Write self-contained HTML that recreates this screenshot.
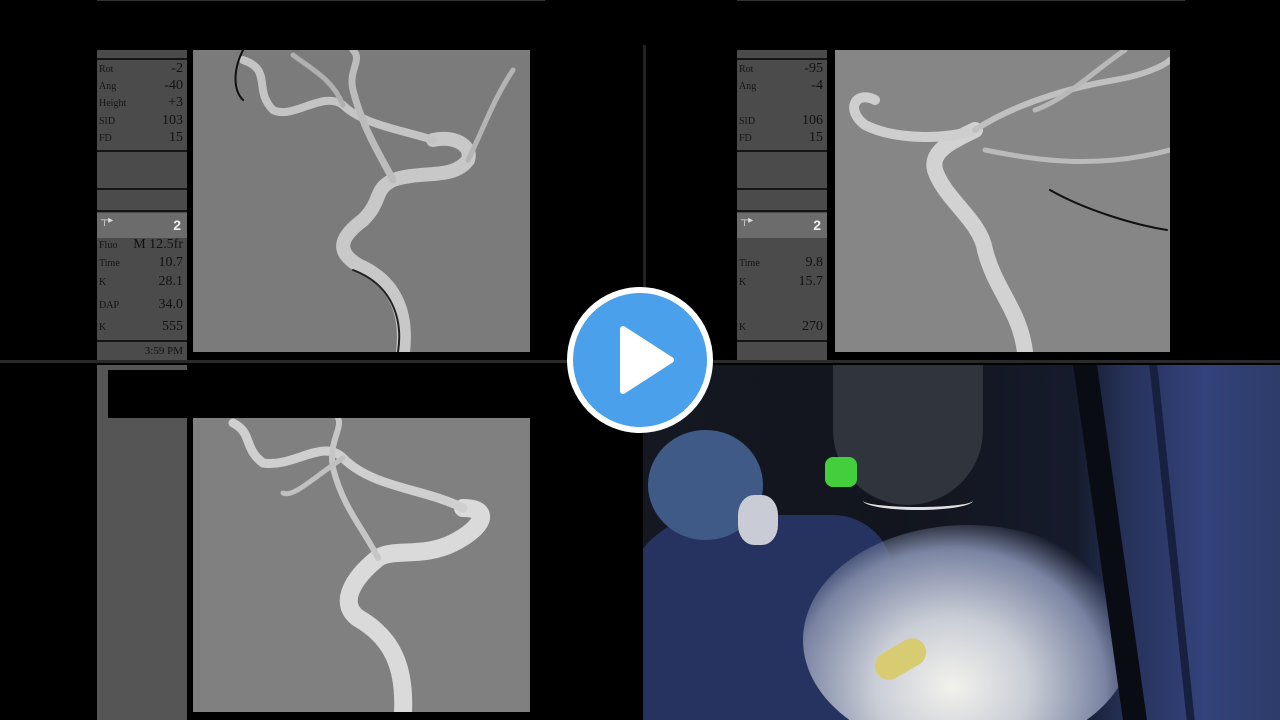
<!DOCTYPE html>
<html><head><meta charset="utf-8"><style>
body{margin:0;width:1280px;height:720px;background:#000;position:relative;overflow:hidden;font-family:"Liberation Sans",sans-serif}
.a{position:absolute}
.panel{background:#4b4b4b}
.sep{position:absolute;left:0;width:90px;height:2px;background:#151515}
.row{position:absolute;left:2px;width:84px;font-size:10px;color:#151515;font-family:"Liberation Serif",serif}
.row b{position:absolute;right:0;top:-3px;font-size:14px;font-weight:normal;color:#111}
.img{background:#7b7b7b}
</style></head><body>
<div class="a" style="left:97px;top:0;width:448px;height:50px;background:#000;border-top:1px solid #333"></div>
<div class="a panel" style="left:97px;top:50px;width:90px;height:310px">
 <div class="sep" style="top:8px"></div>
 <div class="row" style="top:14px">Rot<b>-2</b></div>
 <div class="row" style="top:31px">Ang<b>-40</b></div>
 <div class="row" style="top:48px">Height<b>+3</b></div>
 <div class="row" style="top:66px">SID<b>103</b></div>
 <div class="row" style="top:83px">FD<b>15</b></div>
 <div class="sep" style="top:100px"></div>
 <div class="sep" style="top:138px"></div>
 <div class="sep" style="top:160px"></div>
 <div class="a" style="left:0;top:163px;width:90px;height:25px;background:#6c6c6c"><span class="a" style="right:6px;top:4px;color:#eee;font-size:14px;font-weight:bold">2</span><span class="a" style="left:4px;top:2px;color:#ddd;font-size:10px">┬▸</span></div>
 <div class="row" style="top:190px">Fluo<b>M 12.5fr</b></div>
 <div class="row" style="top:208px">Time<b>10.7</b></div>
 <div class="row" style="top:227px">K<b>28.1</b></div>
 <div class="row" style="top:250px">DAP<b>34.0</b></div>
 <div class="row" style="top:272px">K<b>555</b></div>
 <div class="sep" style="top:290px"></div>
 <div class="row" style="top:298px;color:#222"><b style="font-size:11px">3:59 PM</b></div>
</div>
<div class="a img" style="left:193px;top:50px;width:337px;height:302px">
<svg width="337" height="302" style="position:absolute;left:0;top:0" fill="none" stroke-linecap="round">
 <path d="M210 302 C215 260 200 230 165 215 C140 200 150 185 170 170 C190 150 180 140 200 130 C230 120 260 130 275 110 C280 95 260 85 240 90" stroke="#c8c8c8" stroke-width="14"/>
 <path d="M240 90 C210 80 170 75 150 55 C130 40 100 70 80 60 C60 40 80 20 50 10" stroke="#c4c4c4" stroke-width="8"/>
 <path d="M200 130 C190 110 170 80 160 40 C155 20 170 10 160 0" stroke="#bcbcbc" stroke-width="7"/>
 <path d="M275 110 C290 80 300 50 320 20" stroke="#b4b4b4" stroke-width="5"/>
 <path d="M150 55 C140 30 120 20 100 5" stroke="#b0b0b0" stroke-width="5"/>
 <path d="M50 0 C40 20 40 40 50 50" stroke="#111" stroke-width="2"/>
 <path d="M205 302 C210 270 200 235 160 220" stroke="#222" stroke-width="2"/>
</svg></div>
<div class="a" style="left:737px;top:0;width:448px;height:50px;background:#000;border-top:1px solid #333"></div>
<div class="a panel" style="left:737px;top:50px;width:90px;height:310px">
 <div class="sep" style="top:8px"></div>
 <div class="row" style="top:14px">Rot<b>-95</b></div>
 <div class="row" style="top:31px">Ang<b>-4</b></div>
 <div class="row" style="top:66px">SID<b>106</b></div>
 <div class="row" style="top:83px">FD<b>15</b></div>
 <div class="sep" style="top:100px"></div>
 <div class="sep" style="top:138px"></div>
 <div class="sep" style="top:160px"></div>
 <div class="a" style="left:0;top:163px;width:90px;height:25px;background:#6c6c6c"><span class="a" style="right:6px;top:4px;color:#eee;font-size:14px;font-weight:bold">2</span><span class="a" style="left:4px;top:2px;color:#ddd;font-size:10px">┬▸</span></div>
 <div class="row" style="top:208px">Time<b>9.8</b></div>
 <div class="row" style="top:227px">K<b>15.7</b></div>
 <div class="row" style="top:272px">K<b>270</b></div>
 <div class="sep" style="top:290px"></div>
</div>
<div class="a img" style="left:835px;top:50px;width:335px;height:302px;background:#868686">
<svg width="335" height="302" style="position:absolute;left:0;top:0" fill="none" stroke-linecap="round">
 <path d="M190 302 C185 260 160 240 150 200 C145 170 110 150 100 120 C95 100 120 90 140 80" stroke="#d2d2d2" stroke-width="16"/>
 <path d="M140 80 C110 90 60 90 30 75 C10 60 20 40 40 50" stroke="#cecece" stroke-width="10"/>
 <path d="M140 80 C170 60 220 40 280 30 C310 25 330 15 335 10" stroke="#c0c0c0" stroke-width="6"/>
 <path d="M150 100 C200 110 260 120 335 100" stroke="#bababa" stroke-width="5"/>
 <path d="M200 60 C230 50 260 20 290 0" stroke="#b8b8b8" stroke-width="5"/>
 <path d="M215 140 C250 160 300 175 332 180" stroke="#111" stroke-width="2"/>
</svg></div>
<div class="a" style="left:643px;top:45px;width:3px;height:315px;background:#222"></div>
<div class="a" style="left:0;top:360px;width:1280px;height:3px;background:#2a2a2a"></div>
<div class="a" style="left:97px;top:365px;width:90px;height:355px;background:#555"></div>
<div class="a" style="left:108px;top:370px;width:437px;height:48px;background:#000"></div>
<div class="a img" style="left:193px;top:418px;width:337px;height:294px;background:#808080">
<svg width="337" height="294" style="position:absolute;left:0;top:0" fill="none" stroke-linecap="round">
 <path d="M210 294 C212 250 200 220 165 200 C145 185 160 160 185 140 C200 130 230 140 260 125 C290 110 300 90 270 90" stroke="#dadada" stroke-width="18"/>
 <path d="M270 90 C230 70 180 70 150 40 C130 20 100 50 70 45 C50 30 60 15 40 5" stroke="#cfcfcf" stroke-width="9"/>
 <path d="M185 140 C170 110 150 90 140 50 C135 25 150 10 145 0" stroke="#c6c6c6" stroke-width="6"/>
 <path d="M150 40 C120 60 100 80 90 75" stroke="#c0c0c0" stroke-width="5"/>
</svg></div>
<div class="a" style="left:643px;top:365px;width:637px;height:355px;overflow:hidden;background:linear-gradient(90deg,#151821 0%,#12151d 40%,#161b2c 68%,#26325a 76%,#33427a 88%,#2e3c6a 100%)">
 <div class="a" style="left:-20px;top:150px;width:270px;height:240px;background:#263360;border-radius:90px 60px 0 0"></div>
 <div class="a" style="left:5px;top:65px;width:115px;height:110px;background:#3f5a86;border-radius:50%"></div>
 <div class="a" style="left:95px;top:130px;width:40px;height:50px;background:#c9ccd4;border-radius:40%"></div>
 <div class="a" style="left:190px;top:0;width:150px;height:140px;background:#30343c;border-radius:0 0 75px 75px"></div>
 <div class="a" style="left:220px;top:126px;width:110px;height:16px;border-bottom:3px solid #e0e0e0;border-radius:50%"></div>
 <div class="a" style="left:182px;top:92px;width:32px;height:30px;background:#43cf3c;border-radius:8px"></div>
 <div class="a" style="left:160px;top:160px;width:330px;height:230px;border-radius:50%;background:radial-gradient(ellipse at 45% 70%,#f2f2ec 0%,#c9cdd6 30%,#7a84a2 60%,rgba(40,50,90,0) 75%)"></div>
 <div class="a" style="left:230px;top:280px;width:55px;height:28px;background:#d8cc72;border-radius:14px;transform:rotate(-30deg)"></div>
 <div class="a" style="left:455px;top:0;width:24px;height:355px;background:#0a0c14;transform:skewX(8deg)"></div>
 <div class="a" style="left:525px;top:0;width:8px;height:355px;background:#182040;transform:skewX(6deg)"></div>
</div>
<div class="a" style="left:567px;top:287px;width:134px;height:134px;border-radius:50%;background:#4aa0ea;border:6px solid #fff"></div>
<svg class="a" style="left:567px;top:287px" width="146" height="146"><path d="M56 42 L56 104 L104 73 Z" fill="#fff" stroke="#fff" stroke-width="6" stroke-linejoin="round"/></svg>
</body></html>
